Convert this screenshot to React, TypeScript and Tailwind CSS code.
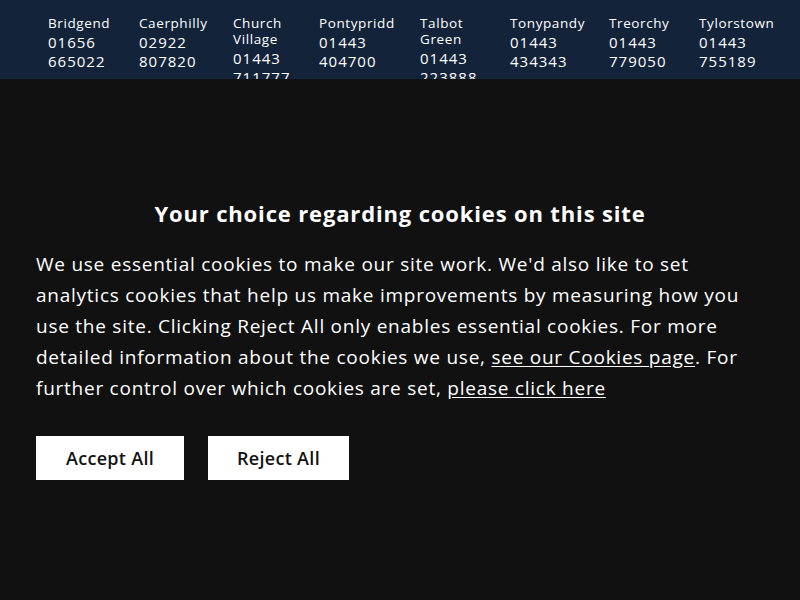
const offices = [
  { name: 'Bridgend', phone: '01656 665022' },
  { name: 'Caerphilly', phone: '02922 807820' },
  { name: 'Church Village', phone: '01443 711777' },
  { name: 'Pontypridd', phone: '01443 404700' },
  { name: 'Talbot Green', phone: '01443 223888' },
  { name: 'Tonypandy', phone: '01443 434343' },
  { name: 'Treorchy', phone: '01443 779050' },
  { name: 'Tylorstown', phone: '01443 755189' },
]

export default function App() {
  return (
    <div className="flex h-[600px] w-[800px] flex-col overflow-hidden bg-[#111111] font-['Open_Sans',sans-serif] text-white">
      <header className="h-[79px] shrink-0 overflow-hidden bg-[#13233a] pl-[48px] pt-[15px]">
        <ul className="grid grid-cols-[91px_94px_86px_101px_90px_99px_90px_auto]">
          {offices.map((office) => (
            <li key={office.name} className="pr-3">
              <p className="text-[13.5px] leading-[16px] tracking-[0.6px]">{office.name}</p>
              <p className="mt-[2px] text-[15px] leading-[19px] tracking-[1px]">{office.phone}</p>
            </li>
          ))}
        </ul>
      </header>

      <section className="px-[36px] pt-[119px]">
        <h2 className="text-center text-[22px] font-bold leading-[30px] tracking-[0.85px]">
          Your choice regarding cookies on this site
        </h2>
        <p className="mt-[21px] text-[19px] leading-[31px] tracking-[0.75px]">
          We use essential cookies to make our site work. We'd also like to set analytics cookies
          that help us make improvements by measuring how you use the site. Clicking Reject All
          only enables essential cookies. For more detailed information about the cookies we use,{' '}
          <a href="#" className="underline underline-offset-2">see our Cookies page</a>. For further
          control over which cookies are set,{' '}
          <a href="#" className="underline underline-offset-2">please click here</a>
        </p>
        <div className="mt-[32px] flex gap-6">
          <button className="h-[44px] w-[148px] bg-white text-[18px] font-semibold tracking-[0.3px] text-[#111111]">
            Accept All
          </button>
          <button className="h-[44px] w-[141px] bg-white text-[18px] font-semibold tracking-[0.3px] text-[#111111]">
            Reject All
          </button>
        </div>
      </section>
    </div>
  )
}
